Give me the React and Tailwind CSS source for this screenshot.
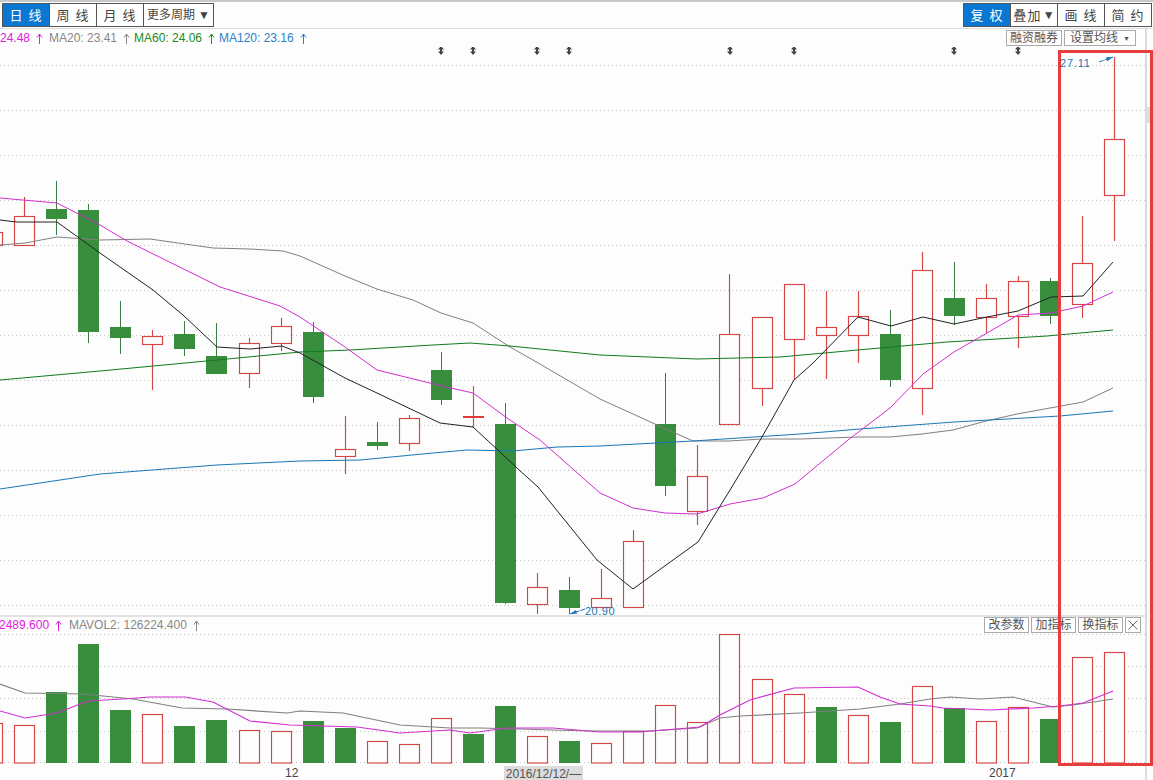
const CJK = "font-['Liberation_Sans','Noto_Sans_CJK_SC',sans-serif]"

// [body-top, body-bottom, wick-top, wick-bottom, kind] kind: 0 down, 1 up, 2 doji
const candles = [
  [232, 245, 232, 245, 1],
  [216, 245, 197, 245, 1],
  [209, 219, 181, 235, 0],
  [210, 332, 204, 343, 0],
  [327, 338, 301, 354, 0],
  [336, 344, 330, 390, 1],
  [334, 349, 321, 356, 0],
  [356, 374, 323, 374, 0],
  [343, 373, 338, 388, 1],
  [326, 343, 318, 351, 1],
  [332, 397, 322, 403, 0],
  [449, 456, 416, 474, 1],
  [442, 446, 422, 450, 0],
  [418, 443, 415, 451, 1],
  [370, 400, 352, 405, 0],
  [416, 417, 386, 428, 2],
  [424, 603, 403, 604, 0],
  [587, 604, 573, 614, 1],
  [590, 608, 577, 614, 0],
  [598, 607, 569, 607, 1],
  [541, 607, 530, 607, 1],
  [424, 486, 373, 496, 0],
  [476, 511, 445, 525, 1],
  [334, 424, 274, 424, 1],
  [317, 388, 317, 406, 1],
  [284, 339, 284, 380, 1],
  [327, 335, 291, 379, 1],
  [316, 335, 291, 363, 1],
  [334, 380, 310, 387, 0],
  [270, 388, 252, 415, 1],
  [298, 316, 262, 325, 0],
  [298, 317, 284, 333, 1],
  [281, 316, 276, 348, 1],
  [281, 316, 278, 324, 0],
  [263, 304, 216, 318, 1],
  [139, 195, 57, 241, 1],
]

const volumes = [723, 725, 692, 644, 710, 714, 726, 720, 730, 731, 721, 728, 741, 744, 718, 734, 706, 736, 741, 743, 731, 705, 722, 634, 679, 694, 707, 715, 722, 686, 708, 721, 707, 719, 657, 652]
const volumeKinds = "rrgggrggrrggrrrggrgrrrrrrrgrgrgrrgrr"

const candleX = (i) => {
  if (i <= 7) return 24 + 32 * (i - 1)
  if (i <= 23) return 249 + 32 * (i - 8)
  return 762 + 32 * (i - 24)
}

const mainLines = [
  {
    color: "#808080",
    points: "0,245 25,243 57,237 100,240 150,239 213,248 250,249 283,251 300,256 345,276 377,289 413,300 441,313 473,323 510,347 533,360 569,381 600,399 633,414 657,425 693,441 729,441 762,439 800,439 858,437 890,437 922,434 953,430 986,421 1017,414 1050,408 1083,402 1113,388",
  },
  {
    color: "#117a1c",
    points: "0,380 100,371 217,360 300,352 350,350 433,345 470,343 510,346 600,355 697,359 780,357 880,348 947,342 1047,336 1113,330",
  },
  {
    color: "#1878b8",
    points: "0,489 100,474 217,465 300,461 360,460 433,453 467,450 513,451 557,447 600,446 693,441 800,434 860,429 954,422 1060,416 1113,411",
  },
  {
    color: "#d22fd2",
    points: "0,198 57,203 100,225 127,241 220,287 280,306 300,317 345,347 377,370 442,386 473,393 507,418 540,440 600,493 633,508 665,513 697,514 730,504 763,498 795,484 848,440 890,408 923,374 954,352 987,333 1018,315 1051,313 1083,306 1113,292",
  },
  {
    color: "#222222",
    points: "0,220 17,222 57,222 100,253 153,290 183,315 217,347 250,349 282,346 300,353 345,378 377,393 440,423 473,427 500,452 517,468 538,487 597,560 633,589 673,560 698,542 730,490 762,437 794,380 812,364 858,317 891,326 923,317 954,324 987,317 1018,311 1051,297 1083,296 1113,262",
  },
]

const volumeLines = [
  {
    color: "#808080",
    points: "0,684 25,693 83,694 133,699 182,708 227,709 287,713 300,711 343,713 400,725 450,728 480,728 520,729 553,730 593,731 650,731 697,728 720,718 740,716 800,713 860,709 900,704 930,699 950,697 980,699 1013,697 1033,702 1053,707 1073,705 1113,699",
  },
  {
    color: "#d22fd2",
    points: "0,711 25,718 57,713 88,701 123,699 150,697 185,697 213,702 250,721 290,725 357,727 400,733 450,730 470,733 507,728 553,728 600,732 640,732 700,727 720,715 750,700 794,688 858,687 880,697 900,704 930,706 943,708 990,710 1033,708 1060,706 1083,703 1113,691",
  },
]

const mainGrid = [65, 110, 155, 200, 245, 290, 335, 380, 425, 470, 515, 560, 605]
const volumeGrid = [634, 666, 698, 731, 762]
const dividendMarks = [441, 473, 537, 569, 730, 794, 954, 1018]

function ToolButton({ children, active, className = "" }) {
  return (
    <button
      className={`flex h-[24px] items-center justify-center whitespace-nowrap border border-[#555] leading-none ${active ? "bg-[#0a78d2] text-white" : "bg-white text-[#444]"} ${className}`}
    >
      {children}
    </button>
  )
}

function MiniButton({ children, className = "" }) {
  return (
    <button
      className={`flex h-[16px] items-center justify-center whitespace-nowrap border border-[#aaa] bg-white text-[12px] leading-none text-[#555] ${className}`}
    >
      {children}
    </button>
  )
}

function UpArrow() {
  return (
    <svg viewBox="0 0 7 11" className="ml-[6px] h-[11px] w-[7px]">
      <path d="M3.5 1V11M1 4.5L3.5 1L6 4.5" fill="none" stroke="currentColor" />
    </svg>
  )
}

function LegendItem({ text, className = "" }) {
  return (
    <span className={`flex items-center whitespace-nowrap ${className}`}>
      {text}
      <UpArrow />
    </span>
  )
}

function Arrow({ x1, y1, x2, y2 }) {
  const angle = Math.atan2(y2 - y1, x2 - x1)
  const tip = (d, a) => `${x2 - d * Math.cos(angle + a)},${y2 - d * Math.sin(angle + a)}`
  return (
    <g>
      <line x1={x1} y1={y1} x2={x2} y2={y2} stroke="#1878b8" strokeDasharray="5 1" />
      <polygon points={`${x2},${y2} ${tip(7, 0.3)} ${tip(7, -0.3)}`} fill="#1878b8" />
    </g>
  )
}

function MainChart() {
  return (
    <svg viewBox="0 47 1145 568" className="block h-[568px] w-[1145px]">
      {mainGrid.map((y) => (
        <line key={y} x1="0" x2="1145" y1={y + 0.5} y2={y + 0.5} stroke="#c4c4c4" strokeDasharray="1 3" />
      ))}
      {dividendMarks.map((x) => (
        <path key={x} d={`M${x} 46l3 3.5h-2v2h2l-3 3.5l-3 -3.5h2v-2h-2z`} fill="#444" />
      ))}
      {candles.map(([top, bottom, high, low, kind], i) => {
        const c = candleX(i)
        if (kind === 0) {
          return (
            <g key={i}>
              <line x1={c + 0.5} x2={c + 0.5} y1={high} y2={low} stroke="#3c7d40" />
              <rect x={c - 10} y={top} width="21" height={bottom - top} fill="#388e3c" />
            </g>
          )
        }
        if (kind === 2) {
          return (
            <g key={i}>
              <line x1={c + 0.5} x2={c + 0.5} y1={high} y2={low} stroke="#d84a4a" strokeWidth="1.15" />
              <rect x={c - 10} y={top} width="21" height="2" fill="#e23a3a" />
            </g>
          )
        }
        return (
          <g key={i}>
            <line x1={c + 0.5} x2={c + 0.5} y1={high} y2={low} stroke="#d44545" strokeWidth="1.15" />
            <rect x={c - 9.5} y={top + 0.5} width="20" height={bottom - top} fill="#fdfdfd" stroke="#d44545" strokeWidth="1.15" />
          </g>
        )
      })}
      {mainLines.map((line) => (
        <polyline key={line.color} points={line.points} fill="none" stroke={line.color} strokeWidth="1" />
      ))}
      <Arrow x1={585} y1={609} x2={570} y2={614} />
      <Arrow x1={1099} y1={62} x2={1113} y2={57} />
    </svg>
  )
}

function VolumeChart() {
  return (
    <svg viewBox="0 633 1145 132" className="block h-[132px] w-[1145px]">
      {volumeGrid.map((y) => (
        <line key={y} x1="0" x2="1145" y1={y + 0.5} y2={y + 0.5} stroke="#c4c4c4" strokeDasharray="1 3" />
      ))}
      {volumes.map((top, i) => {
        const c = candleX(i)
        return volumeKinds[i] === "g" ? (
          <rect key={i} x={c - 10} y={top} width="21" height={763 - top} fill="#388e3c" />
        ) : (
          <rect key={i} x={c - 9.5} y={top + 0.5} width="20" height={762.5 - top} fill="#fdfdfd" stroke="#d44545" strokeWidth="1.15" />
        )
      })}
      {volumeLines.map((line) => (
        <polyline key={line.color} points={line.points} fill="none" stroke={line.color} strokeWidth="1.2" />
      ))}
    </svg>
  )
}

export default function App() {
  return (
    <div className={`relative flex h-[780px] w-[1153px] flex-col overflow-hidden bg-[#fdfdfd] ${CJK}`}>
      <div className="flex h-[29px] shrink-0 items-start justify-between border-t-2 border-b border-t-[#c8c8c8] border-b-[#ddd] pt-[1px] pl-[2px] pr-[1px] text-[13px] tracking-[1.2px]">
        <div className="flex">
          <ToolButton active className="w-[48px]">日 线</ToolButton>
          <ToolButton className="-ml-px w-[48px]">周 线</ToolButton>
          <ToolButton className="-ml-px w-[48px]">月 线</ToolButton>
          <ToolButton className="-ml-px w-[71px] text-[12px] tracking-normal">
            更多周期<span className="ml-[3px]">▼</span>
          </ToolButton>
        </div>
        <div className="flex">
          <ToolButton active className="w-[48px]">复 权</ToolButton>
          <ToolButton className="-ml-px w-[48px]">
            叠加<span className="ml-[1px] text-[12px] tracking-normal">▼</span>
          </ToolButton>
          <ToolButton className="-ml-px w-[48px]">画 线</ToolButton>
          <ToolButton className="-ml-px w-[48px]">简 约</ToolButton>
        </div>
      </div>

      <div className="flex flex-1">
        <div className="flex w-[1147px] flex-col border-r-2 border-r-[#dcdcdc]">
          <div className="flex h-[18px] shrink-0 items-center text-[12px]">
            <LegendItem text="24.48" className="w-[49px] text-[#e020d8]" />
            <LegendItem text="MA20: 23.41" className="w-[85px] text-[#888]" />
            <LegendItem text="MA60: 24.06" className="w-[85px] text-[#1a8a22]" />
            <LegendItem text="MA120: 23.16" className="text-[#2a80c8]" />
            <div className="ml-auto flex gap-[2px] pr-[9px]">
              <MiniButton className="w-[56px]">融资融券</MiniButton>
              <MiniButton className="w-[72px] gap-[5px]">
                设置均线<span className="text-[7px] text-[#555]">▼</span>
              </MiniButton>
            </div>
          </div>
          <MainChart />
          <div className="flex h-[18px] shrink-0 items-center border-t-2 border-t-[#e2e2e2] text-[12px]">
            <LegendItem text="2489.600" className="-ml-px w-[70px] text-[#e020d8]" />
            <LegendItem text="MAVOL2: 126224.400" className="text-[#888]" />
            <div className="ml-auto flex gap-[2px] pr-[4px]">
              <MiniButton className="w-[45px]">改参数</MiniButton>
              <MiniButton className="w-[45px]">加指标</MiniButton>
              <MiniButton className="w-[45px]">换指标</MiniButton>
              <MiniButton className="w-[16px]">
                <svg viewBox="0 0 10 10" className="h-[10px] w-[10px]">
                  <path d="M0.5 0.5L9.5 9.5M9.5 0.5L0.5 9.5" stroke="#666" />
                </svg>
              </MiniButton>
            </div>
          </div>
          <VolumeChart />
          <div className="relative h-[15px] text-[12px] leading-[14px] text-[#444]">
            <span className="absolute left-[285px] top-[1px]">12</span>
            <span className="absolute left-[504px] top-[1px] h-[14px] w-[79px] bg-[#dcdcdc] text-center leading-[16px] text-[#555]">2016/12/12/—</span>
            <span className="absolute left-[989px] top-[1px]">2017</span>
          </div>
        </div>
        <div className="flex-1">
          <div className="mt-[78px] h-[16px] bg-[#dedede]" />
        </div>
      </div>

      <span className="absolute left-[1060px] top-[55px] text-[11px] tracking-[0.8px] text-[#1878b8]">27.11</span>
      <span className="absolute left-[585px] top-[603px] text-[11px] tracking-[0.5px] text-[#1878b8]">20.90</span>
      <div className="pointer-events-none absolute left-[1058px] top-[50px] h-[716px] w-[95px] border-[3px] border-[#e63e3e]" />
    </div>
  )
}
